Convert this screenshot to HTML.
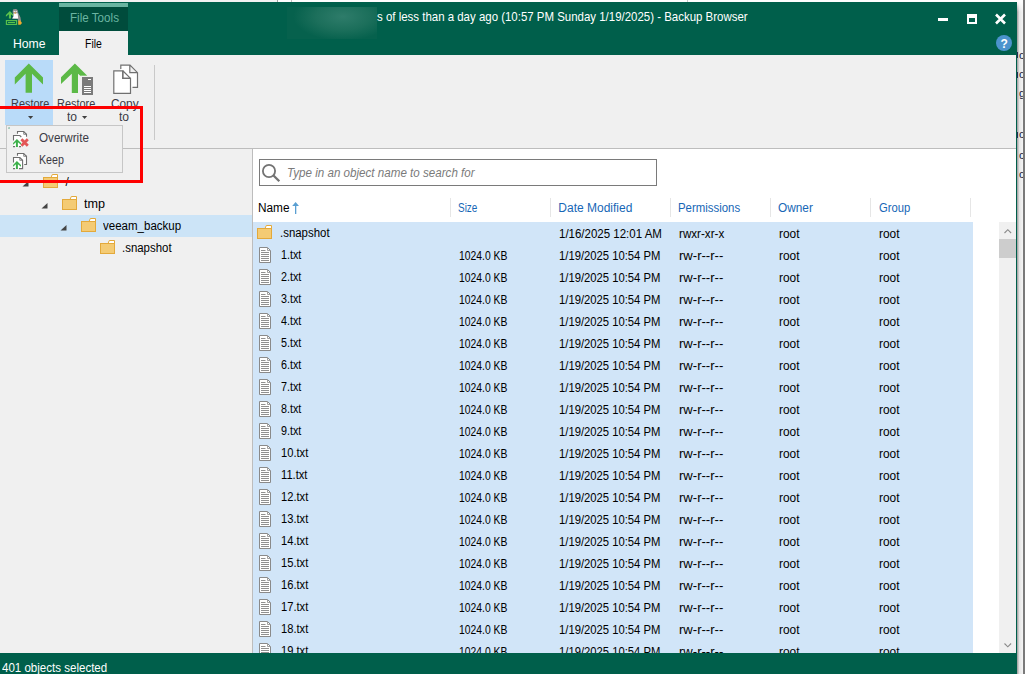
<!DOCTYPE html>
<html><head><meta charset="utf-8"><title>Backup Browser</title>
<style>
*{margin:0;padding:0;box-sizing:border-box}
html,body{width:1025px;height:674px;overflow:hidden;background:#fdfdfd;position:relative;font-family:"Liberation Sans",sans-serif}
.a{position:absolute}
.t{white-space:nowrap}
</style></head><body>
<div class="a" style="left:0px;top:0px;width:277px;height:2px;background:#f2f2f2"></div>
<div class="a" style="left:277px;top:0px;width:1px;height:2px;background:#a0a0a0"></div>
<div class="a" style="left:687px;top:0px;width:1px;height:2px;background:#c8c8c8"></div>
<div class="a" style="left:291px;top:0px;width:1px;height:2px;background:#c0c0c0"></div>
<div class="a" style="left:0px;top:2px;width:1016px;height:53px;background:#005f4b"></div>
<div class="a" style="left:1016px;top:2px;width:1px;height:672px;background:#005f4b"></div>
<div class="a" style="left:1017px;top:2px;width:6px;height:672px;background:linear-gradient(to right,#9a9a9a,#e6e6e6 40%,#f4f4f4)"></div>
<div class="a" style="left:1017px;top:2px;width:6px;height:10px;background:linear-gradient(to bottom,#fdfdfd,rgba(253,253,253,0))"></div>
<div class="a" style="left:1023px;top:0px;width:2px;height:674px;background:#7a7a7a"></div>
<svg class="a" style="left:0;top:0" width="26" height="30" viewBox="0 0 26 30">
<rect x="6.4" y="20.6" width="10.2" height="3.8" fill="none" stroke="#5bc44c" stroke-width="1.1"/>
<rect x="8" y="22" width="7" height="1" fill="#5bc44c"/>
<path d="M9.9 11 L13.8 14.9 L13.8 16.8 L11 14.3 L11 18.6 L8.9 18.6 L8.9 14.3 L5.9 16.8 L5.9 14.9 Z" fill="#5bc44c"/>
<path d="M13 9.5 C14.5 8.6 17 8.8 17.8 10.5 L18.3 13 L20.5 17.5 L21 21 L18 21.5 L17.8 19 L12.2 18.6 L13.5 15.5 L12.6 12 Z" fill="#8f8f8f"/>
<path d="M13.6 13.6 L17.6 13.2 L18.2 18.6 L12.2 18.6 L13.6 16.5 Z" fill="#fff"/>
<circle cx="14.3" cy="11.6" r="0.8" fill="#e8e8e8"/><circle cx="16.2" cy="11.6" r="0.8" fill="#e8e8e8"/>
<path d="M14 12.6 L16.3 12.4 L15.3 13.9 Z" fill="#f0a22a"/>
<path d="M18.2 20.8 L20.3 20.4 L22 23 L20.5 24.7 L18.2 24.7 Z" fill="#eeab2e"/>
</svg>
<div class="a" style="left:59px;top:3px;width:69px;height:28px;background:#004c3c"></div>
<div class="a" style="left:59px;top:3px;width:69px;height:4px;background:#69b4a1"></div>
<div class="a t" style="left:69.50px;top:11.84px;font-size:12px;line-height:12px;color:#6bb5a2;transform:scaleX(0.9700);transform-origin:0 0;">File Tools</div>
<div class="a" style="left:59px;top:31px;width:69px;height:24px;background:#f0f0f0"></div>
<div class="a t" style="left:84.60px;top:37.84px;font-size:12px;line-height:12px;color:#000;transform:scaleX(0.8700);transform-origin:0 0;">File</div>
<div class="a t" style="left:12.50px;top:37.84px;font-size:12px;line-height:12px;color:#fff;transform:scaleX(1.0156);transform-origin:0 0;">Home</div>
<div class="a" style="left:287px;top:7px;width:90px;height:32px;background:radial-gradient(ellipse 55% 75% at 62% 30%,#2e7c6a,#1c6f5b 55%,#06614d 100%)"></div>
<div class="a t" style="left:377.00px;top:10.00px;font-size:13px;line-height:13px;color:#fff;transform:scaleX(0.8812);transform-origin:0 0;">s of less than a day ago (10:57 PM Sunday 1/19/2025) - Backup Browser</div>
<div class="a" style="left:938px;top:18px;width:10px;height:3px;background:#fff"></div>
<div class="a" style="left:967px;top:14px;width:10px;height:10px;border:2px solid #fff;border-top-width:4px"></div>
<svg class="a" style="left:994px;top:13px" width="13" height="12" viewBox="0 0 13 12">
<path d="M2 1.5 L11 10.5 M11 1.5 L2 10.5" stroke="#fff" stroke-width="2.6"/></svg>
<div class="a" style="left:996px;top:35px;width:16px;height:16px;border-radius:50%;background:#4b93cd"></div>
<div class="a t" style="left:1000.50px;top:37.84px;font-size:12px;line-height:12px;color:#fff;font-weight:bold;">?</div>
<div class="a" style="left:0px;top:55px;width:1016px;height:93px;background:#f0f0f0"></div>
<div class="a" style="left:0px;top:148px;width:1016px;height:1px;background:#bdbdbd"></div>
<div class="a" style="left:5px;top:60px;width:48px;height:65px;background:#b9dbf9"></div>
<svg class="a" style="left:0;top:55px" width="160" height="45" viewBox="0 55 160 45">
<path d="M28.8 63.6 L43 77.6 L43 84.4 L32 73.7 L32 92.8 L25.6 92.8 L25.6 73.7 L14.8 84.4 L14.8 77.6 Z" fill="#5cb947"/>
<path d="M74.9 63.5 L87.3 75.7 L80.3 75.7 L78 73.8 L78 93 L71.8 93 L71.8 73.8 L61 84 L61 77.2 Z" fill="#5cb947"/>
<rect x="81" y="75.9" width="13" height="20" fill="#f0f0f0"/>
<rect x="82" y="77" width="11" height="18" fill="#7b7b7b"/>
<rect x="88" y="79" width="3" height="1" fill="#fff"/>
<rect x="84" y="86" width="7" height="1" fill="#fff"/>
<rect x="84" y="88" width="7" height="1" fill="#fff"/>
<rect x="84" y="90" width="7" height="1" fill="#fff"/>
<rect x="84" y="92" width="7" height="1" fill="#fff"/>
<path d="M120.8 65.2 H129.8 V72.7 H137.5 V87.3 H120.8 Z" fill="#fff"/>
<path d="M120.8 69 V65.2 H130 L137.5 72.7 V87.3 H132.5 M129.8 65.2 V72.7 H137.5" fill="none" stroke="#707070" stroke-width="1.2"/>
<path d="M113.8 70.8 H122.8 V78.4 H130.5 V93.3 H113.8 Z" fill="#fff" stroke="#707070" stroke-width="1.2"/>
<path d="M122.8 70.8 L130.5 78.4 M122.8 70.8 V78.4 H130.5" fill="none" stroke="#707070" stroke-width="1.2"/>
</svg>
<div class="a t" style="left:10.60px;top:97.84px;font-size:12px;line-height:12px;color:#3b3b45;transform:scaleX(0.9119);transform-origin:0 0;">Restore</div>
<div class="a t" style="left:56.50px;top:97.84px;font-size:12px;line-height:12px;color:#3b3b45;transform:scaleX(0.9119);transform-origin:0 0;">Restore</div>
<div class="a t" style="left:110.60px;top:97.84px;font-size:12px;line-height:12px;color:#3b3b45;transform:scaleX(0.9857);transform-origin:0 0;">Copy</div>
<div class="a t" style="left:67.20px;top:110.84px;font-size:12px;line-height:12px;color:#3b3b45;transform:scaleX(1.0100);transform-origin:0 0;">to</div>
<div class="a t" style="left:119.00px;top:110.84px;font-size:12px;line-height:12px;color:#3b3b45;transform:scaleX(1.0100);transform-origin:0 0;">to</div>
<svg class="a" style="left:0;top:110px" width="100" height="12" viewBox="0 110 100 12">
<path d="M28 116 L33.2 116 L30.6 119 Z" fill="#404040"/>
<path d="M82 116 L87.2 116 L84.6 119 Z" fill="#404040"/>
</svg>
<div class="a" style="left:154px;top:65px;width:1px;height:75px;background:#c9c9c9"></div>
<div class="a" style="left:0px;top:149px;width:252px;height:504px;background:#f0f0f0"></div>
<div class="a" style="left:252px;top:149px;width:1px;height:504px;background:#bdbdbd"></div>
<div class="a" style="left:253px;top:149px;width:763px;height:504px;background:#fff"></div>
<div class="a" style="left:0px;top:215px;width:252px;height:22px;background:#cce4f7"></div>
<svg class="a" style="left:22px;top:180.5px" width="7" height="6" viewBox="0 0 7 6"><path d="M6.5 0 L6.5 5.5 L0.5 5.5 Z" fill="#444"/></svg>
<svg class="a" style="left:43px;top:174px" width="15" height="14" viewBox="0 0 15 14">
<path d="M8 3.5 L9.3 0.5 L14.5 0.5 L14.5 3.5 Z" fill="#fff" stroke="#e3a93b" stroke-width="1"/>
<rect x="0.5" y="3.5" width="14" height="10" fill="#f4cb74" stroke="#e3a93b" stroke-width="1"/>
</svg>
<div class="a t" style="left:65.50px;top:175.84px;font-size:12px;line-height:12px;color:#000;">/</div>
<svg class="a" style="left:41px;top:202.5px" width="7" height="6" viewBox="0 0 7 6"><path d="M6.5 0 L6.5 5.5 L0.5 5.5 Z" fill="#444"/></svg>
<svg class="a" style="left:62px;top:196px" width="15" height="14" viewBox="0 0 15 14">
<path d="M8 3.5 L9.3 0.5 L14.5 0.5 L14.5 3.5 Z" fill="#fff" stroke="#e3a93b" stroke-width="1"/>
<rect x="0.5" y="3.5" width="14" height="10" fill="#f4cb74" stroke="#e3a93b" stroke-width="1"/>
</svg>
<div class="a t" style="left:83.80px;top:197.84px;font-size:12px;line-height:12px;color:#000;transform:scaleX(1.0500);transform-origin:0 0;">tmp</div>
<svg class="a" style="left:60px;top:224.5px" width="7" height="6" viewBox="0 0 7 6"><path d="M6.5 0 L6.5 5.5 L0.5 5.5 Z" fill="#444"/></svg>
<svg class="a" style="left:81px;top:218px" width="15" height="14" viewBox="0 0 15 14">
<path d="M8 3.5 L9.3 0.5 L14.5 0.5 L14.5 3.5 Z" fill="#fff" stroke="#e3a93b" stroke-width="1"/>
<rect x="0.5" y="3.5" width="14" height="10" fill="#f4cb74" stroke="#e3a93b" stroke-width="1"/>
</svg>
<div class="a t" style="left:102.70px;top:219.84px;font-size:12px;line-height:12px;color:#000;transform:scaleX(0.9598);transform-origin:0 0;">veeam_backup</div>
<svg class="a" style="left:100px;top:240px" width="15" height="14" viewBox="0 0 15 14">
<path d="M8 3.5 L9.3 0.5 L14.5 0.5 L14.5 3.5 Z" fill="#fff" stroke="#e3a93b" stroke-width="1"/>
<rect x="0.5" y="3.5" width="14" height="10" fill="#f4cb74" stroke="#e3a93b" stroke-width="1"/>
</svg>
<div class="a t" style="left:121.60px;top:241.84px;font-size:12px;line-height:12px;color:#000;transform:scaleX(0.9528);transform-origin:0 0;">.snapshot</div>
<div class="a" style="left:259px;top:159px;width:398px;height:27px;border:1px solid #7a7a7a;background:#fff"></div>
<svg class="a" style="left:260px;top:162px" width="22" height="22" viewBox="260 162 22 22">
<circle cx="269" cy="171" r="6.1" fill="none" stroke="#737373" stroke-width="1.8"/>
<path d="M273.5 175.5 L279.3 181.3" stroke="#737373" stroke-width="2.3"/>
</svg>
<div class="a t" style="left:287.30px;top:166.84px;font-size:12px;line-height:12px;color:#7a7a7a;font-style:italic;transform:scaleX(0.9677);transform-origin:0 0;">Type in an object name to search for</div>
<div class="a t" style="left:258.40px;top:201.84px;font-size:12px;line-height:12px;color:#000;transform:scaleX(0.9844);transform-origin:0 0;">Name</div>
<svg class="a" style="left:290px;top:200px" width="12" height="16" viewBox="290 200 12 16">
<path d="M292.2 206 L295.6 202 L299 206 Z" fill="#5a9fd2"/><rect x="295" y="205" width="1.3" height="9" fill="#5a9fd2"/>
</svg>
<div class="a t" style="left:458.10px;top:201.84px;font-size:12px;line-height:12px;color:#1767b6;transform:scaleX(0.8292);transform-origin:0 0;">Size</div>
<div class="a t" style="left:558.30px;top:201.84px;font-size:12px;line-height:12px;color:#1767b6;">Date Modified</div>
<div class="a t" style="left:678.40px;top:201.84px;font-size:12px;line-height:12px;color:#1767b6;transform:scaleX(0.9508);transform-origin:0 0;">Permissions</div>
<div class="a t" style="left:778.30px;top:201.84px;font-size:12px;line-height:12px;color:#1767b6;transform:scaleX(0.9857);transform-origin:0 0;">Owner</div>
<div class="a t" style="left:878.60px;top:201.84px;font-size:12px;line-height:12px;color:#1767b6;transform:scaleX(0.9353);transform-origin:0 0;">Group</div>
<div class="a" style="left:450px;top:198px;width:1px;height:19px;background:#e6e6e6"></div>
<div class="a" style="left:550px;top:198px;width:1px;height:19px;background:#e6e6e6"></div>
<div class="a" style="left:670px;top:198px;width:1px;height:19px;background:#e6e6e6"></div>
<div class="a" style="left:770px;top:198px;width:1px;height:19px;background:#e6e6e6"></div>
<div class="a" style="left:870px;top:198px;width:1px;height:19px;background:#e6e6e6"></div>
<div class="a" style="left:970px;top:198px;width:1px;height:19px;background:#e6e6e6"></div>
<div class="a" style="left:253px;top:222px;width:720px;height:22px;background:#d1e5f8"></div>
<div class="a" style="left:253px;top:244px;width:720px;height:22px;background:#d1e5f8"></div>
<div class="a" style="left:253px;top:266px;width:720px;height:22px;background:#d1e5f8"></div>
<div class="a" style="left:253px;top:288px;width:720px;height:22px;background:#d1e5f8"></div>
<div class="a" style="left:253px;top:310px;width:720px;height:22px;background:#d1e5f8"></div>
<div class="a" style="left:253px;top:332px;width:720px;height:22px;background:#d1e5f8"></div>
<div class="a" style="left:253px;top:354px;width:720px;height:22px;background:#d1e5f8"></div>
<div class="a" style="left:253px;top:376px;width:720px;height:22px;background:#d1e5f8"></div>
<div class="a" style="left:253px;top:398px;width:720px;height:22px;background:#d1e5f8"></div>
<div class="a" style="left:253px;top:420px;width:720px;height:22px;background:#d1e5f8"></div>
<div class="a" style="left:253px;top:442px;width:720px;height:22px;background:#d1e5f8"></div>
<div class="a" style="left:253px;top:464px;width:720px;height:22px;background:#d1e5f8"></div>
<div class="a" style="left:253px;top:486px;width:720px;height:22px;background:#d1e5f8"></div>
<div class="a" style="left:253px;top:508px;width:720px;height:22px;background:#d1e5f8"></div>
<div class="a" style="left:253px;top:530px;width:720px;height:22px;background:#d1e5f8"></div>
<div class="a" style="left:253px;top:552px;width:720px;height:22px;background:#d1e5f8"></div>
<div class="a" style="left:253px;top:574px;width:720px;height:22px;background:#d1e5f8"></div>
<div class="a" style="left:253px;top:596px;width:720px;height:22px;background:#d1e5f8"></div>
<div class="a" style="left:253px;top:618px;width:720px;height:22px;background:#d1e5f8"></div>
<div class="a" style="left:253px;top:640px;width:720px;height:13px;background:#d1e5f8"></div>
<div class="a" style="left:253px;top:222px;width:746px;height:431px;overflow:hidden">
<svg class="a" style="left:4px;top:3px" width="15" height="14" viewBox="0 0 15 14">
<path d="M8 3.5 L9.3 0.5 L14.5 0.5 L14.5 3.5 Z" fill="#fff" stroke="#e3a93b" stroke-width="1"/>
<rect x="0.5" y="3.5" width="14" height="10" fill="#f4cb74" stroke="#e3a93b" stroke-width="1"/>
</svg>
<div class="a t" style="left:27.30px;top:4.84px;font-size:12px;line-height:12px;color:#000;transform:scaleX(0.9530);transform-origin:0 0;">.snapshot</div>
<div class="a t" style="left:305.50px;top:5.84px;font-size:12px;line-height:12px;color:#000;transform:scaleX(0.9579);transform-origin:0 0;">1/16/2025 12:01 AM</div>
<div class="a t" style="left:425.50px;top:5.84px;font-size:12px;line-height:12px;color:#000;transform:scaleX(0.9702);transform-origin:0 0;">rwxr-xr-x</div>
<div class="a t" style="left:525.50px;top:5.84px;font-size:12px;line-height:12px;color:#000;transform:scaleX(0.9905);transform-origin:0 0;">root</div>
<div class="a t" style="left:625.50px;top:5.84px;font-size:12px;line-height:12px;color:#000;transform:scaleX(0.9905);transform-origin:0 0;">root</div>
<svg class="a" style="left:6px;top:25px" width="12" height="16" viewBox="0 0 12 16">
<path d="M0.5 0.5 L8.5 0.5 L11.5 3.5 L11.5 15.5 L0.5 15.5 Z" fill="#fff" stroke="#8a8a8a" stroke-width="1"/>
<path d="M8.5 0.5 L8.5 3.5 L11.5 3.5" fill="none" stroke="#a0a0a0" stroke-width="1"/>
<path d="M2 3.5 H6.5 M2 5.5 H10 M2 7.5 H10 M2 9.5 H10 M2 11.5 H10 M2 13.5 H10" stroke="#909090" stroke-width="1"/>
</svg>
<div class="a t" style="left:28.00px;top:26.84px;font-size:12px;line-height:12px;color:#000;transform:scaleX(0.8960);transform-origin:0 0;">1.txt</div>
<div class="a t" style="left:206.00px;top:27.84px;font-size:12px;line-height:12px;color:#000;transform:scaleX(0.8643);transform-origin:0 0;">1024.0 KB</div>
<div class="a t" style="left:305.50px;top:27.84px;font-size:12px;line-height:12px;color:#000;transform:scaleX(0.9380);transform-origin:0 0;">1/19/2025 10:54 PM</div>
<div class="a t" style="left:425.50px;top:27.84px;font-size:12px;line-height:12px;color:#000;transform:scaleX(1.0902);transform-origin:0 0;">rw-r--r--</div>
<div class="a t" style="left:525.50px;top:27.84px;font-size:12px;line-height:12px;color:#000;transform:scaleX(0.9905);transform-origin:0 0;">root</div>
<div class="a t" style="left:625.50px;top:27.84px;font-size:12px;line-height:12px;color:#000;transform:scaleX(0.9905);transform-origin:0 0;">root</div>
<svg class="a" style="left:6px;top:47px" width="12" height="16" viewBox="0 0 12 16">
<path d="M0.5 0.5 L8.5 0.5 L11.5 3.5 L11.5 15.5 L0.5 15.5 Z" fill="#fff" stroke="#8a8a8a" stroke-width="1"/>
<path d="M8.5 0.5 L8.5 3.5 L11.5 3.5" fill="none" stroke="#a0a0a0" stroke-width="1"/>
<path d="M2 3.5 H6.5 M2 5.5 H10 M2 7.5 H10 M2 9.5 H10 M2 11.5 H10 M2 13.5 H10" stroke="#909090" stroke-width="1"/>
</svg>
<div class="a t" style="left:28.00px;top:48.84px;font-size:12px;line-height:12px;color:#000;transform:scaleX(0.8960);transform-origin:0 0;">2.txt</div>
<div class="a t" style="left:206.00px;top:49.84px;font-size:12px;line-height:12px;color:#000;transform:scaleX(0.8643);transform-origin:0 0;">1024.0 KB</div>
<div class="a t" style="left:305.50px;top:49.84px;font-size:12px;line-height:12px;color:#000;transform:scaleX(0.9380);transform-origin:0 0;">1/19/2025 10:54 PM</div>
<div class="a t" style="left:425.50px;top:49.84px;font-size:12px;line-height:12px;color:#000;transform:scaleX(1.0902);transform-origin:0 0;">rw-r--r--</div>
<div class="a t" style="left:525.50px;top:49.84px;font-size:12px;line-height:12px;color:#000;transform:scaleX(0.9905);transform-origin:0 0;">root</div>
<div class="a t" style="left:625.50px;top:49.84px;font-size:12px;line-height:12px;color:#000;transform:scaleX(0.9905);transform-origin:0 0;">root</div>
<svg class="a" style="left:6px;top:69px" width="12" height="16" viewBox="0 0 12 16">
<path d="M0.5 0.5 L8.5 0.5 L11.5 3.5 L11.5 15.5 L0.5 15.5 Z" fill="#fff" stroke="#8a8a8a" stroke-width="1"/>
<path d="M8.5 0.5 L8.5 3.5 L11.5 3.5" fill="none" stroke="#a0a0a0" stroke-width="1"/>
<path d="M2 3.5 H6.5 M2 5.5 H10 M2 7.5 H10 M2 9.5 H10 M2 11.5 H10 M2 13.5 H10" stroke="#909090" stroke-width="1"/>
</svg>
<div class="a t" style="left:28.00px;top:70.84px;font-size:12px;line-height:12px;color:#000;transform:scaleX(0.8960);transform-origin:0 0;">3.txt</div>
<div class="a t" style="left:206.00px;top:71.84px;font-size:12px;line-height:12px;color:#000;transform:scaleX(0.8643);transform-origin:0 0;">1024.0 KB</div>
<div class="a t" style="left:305.50px;top:71.84px;font-size:12px;line-height:12px;color:#000;transform:scaleX(0.9380);transform-origin:0 0;">1/19/2025 10:54 PM</div>
<div class="a t" style="left:425.50px;top:71.84px;font-size:12px;line-height:12px;color:#000;transform:scaleX(1.0902);transform-origin:0 0;">rw-r--r--</div>
<div class="a t" style="left:525.50px;top:71.84px;font-size:12px;line-height:12px;color:#000;transform:scaleX(0.9905);transform-origin:0 0;">root</div>
<div class="a t" style="left:625.50px;top:71.84px;font-size:12px;line-height:12px;color:#000;transform:scaleX(0.9905);transform-origin:0 0;">root</div>
<svg class="a" style="left:6px;top:91px" width="12" height="16" viewBox="0 0 12 16">
<path d="M0.5 0.5 L8.5 0.5 L11.5 3.5 L11.5 15.5 L0.5 15.5 Z" fill="#fff" stroke="#8a8a8a" stroke-width="1"/>
<path d="M8.5 0.5 L8.5 3.5 L11.5 3.5" fill="none" stroke="#a0a0a0" stroke-width="1"/>
<path d="M2 3.5 H6.5 M2 5.5 H10 M2 7.5 H10 M2 9.5 H10 M2 11.5 H10 M2 13.5 H10" stroke="#909090" stroke-width="1"/>
</svg>
<div class="a t" style="left:28.00px;top:92.84px;font-size:12px;line-height:12px;color:#000;transform:scaleX(0.8960);transform-origin:0 0;">4.txt</div>
<div class="a t" style="left:206.00px;top:93.84px;font-size:12px;line-height:12px;color:#000;transform:scaleX(0.8643);transform-origin:0 0;">1024.0 KB</div>
<div class="a t" style="left:305.50px;top:93.84px;font-size:12px;line-height:12px;color:#000;transform:scaleX(0.9380);transform-origin:0 0;">1/19/2025 10:54 PM</div>
<div class="a t" style="left:425.50px;top:93.84px;font-size:12px;line-height:12px;color:#000;transform:scaleX(1.0902);transform-origin:0 0;">rw-r--r--</div>
<div class="a t" style="left:525.50px;top:93.84px;font-size:12px;line-height:12px;color:#000;transform:scaleX(0.9905);transform-origin:0 0;">root</div>
<div class="a t" style="left:625.50px;top:93.84px;font-size:12px;line-height:12px;color:#000;transform:scaleX(0.9905);transform-origin:0 0;">root</div>
<svg class="a" style="left:6px;top:113px" width="12" height="16" viewBox="0 0 12 16">
<path d="M0.5 0.5 L8.5 0.5 L11.5 3.5 L11.5 15.5 L0.5 15.5 Z" fill="#fff" stroke="#8a8a8a" stroke-width="1"/>
<path d="M8.5 0.5 L8.5 3.5 L11.5 3.5" fill="none" stroke="#a0a0a0" stroke-width="1"/>
<path d="M2 3.5 H6.5 M2 5.5 H10 M2 7.5 H10 M2 9.5 H10 M2 11.5 H10 M2 13.5 H10" stroke="#909090" stroke-width="1"/>
</svg>
<div class="a t" style="left:28.00px;top:114.84px;font-size:12px;line-height:12px;color:#000;transform:scaleX(0.8960);transform-origin:0 0;">5.txt</div>
<div class="a t" style="left:206.00px;top:115.84px;font-size:12px;line-height:12px;color:#000;transform:scaleX(0.8643);transform-origin:0 0;">1024.0 KB</div>
<div class="a t" style="left:305.50px;top:115.84px;font-size:12px;line-height:12px;color:#000;transform:scaleX(0.9380);transform-origin:0 0;">1/19/2025 10:54 PM</div>
<div class="a t" style="left:425.50px;top:115.84px;font-size:12px;line-height:12px;color:#000;transform:scaleX(1.0902);transform-origin:0 0;">rw-r--r--</div>
<div class="a t" style="left:525.50px;top:115.84px;font-size:12px;line-height:12px;color:#000;transform:scaleX(0.9905);transform-origin:0 0;">root</div>
<div class="a t" style="left:625.50px;top:115.84px;font-size:12px;line-height:12px;color:#000;transform:scaleX(0.9905);transform-origin:0 0;">root</div>
<svg class="a" style="left:6px;top:135px" width="12" height="16" viewBox="0 0 12 16">
<path d="M0.5 0.5 L8.5 0.5 L11.5 3.5 L11.5 15.5 L0.5 15.5 Z" fill="#fff" stroke="#8a8a8a" stroke-width="1"/>
<path d="M8.5 0.5 L8.5 3.5 L11.5 3.5" fill="none" stroke="#a0a0a0" stroke-width="1"/>
<path d="M2 3.5 H6.5 M2 5.5 H10 M2 7.5 H10 M2 9.5 H10 M2 11.5 H10 M2 13.5 H10" stroke="#909090" stroke-width="1"/>
</svg>
<div class="a t" style="left:28.00px;top:136.84px;font-size:12px;line-height:12px;color:#000;transform:scaleX(0.8960);transform-origin:0 0;">6.txt</div>
<div class="a t" style="left:206.00px;top:137.84px;font-size:12px;line-height:12px;color:#000;transform:scaleX(0.8643);transform-origin:0 0;">1024.0 KB</div>
<div class="a t" style="left:305.50px;top:137.84px;font-size:12px;line-height:12px;color:#000;transform:scaleX(0.9380);transform-origin:0 0;">1/19/2025 10:54 PM</div>
<div class="a t" style="left:425.50px;top:137.84px;font-size:12px;line-height:12px;color:#000;transform:scaleX(1.0902);transform-origin:0 0;">rw-r--r--</div>
<div class="a t" style="left:525.50px;top:137.84px;font-size:12px;line-height:12px;color:#000;transform:scaleX(0.9905);transform-origin:0 0;">root</div>
<div class="a t" style="left:625.50px;top:137.84px;font-size:12px;line-height:12px;color:#000;transform:scaleX(0.9905);transform-origin:0 0;">root</div>
<svg class="a" style="left:6px;top:157px" width="12" height="16" viewBox="0 0 12 16">
<path d="M0.5 0.5 L8.5 0.5 L11.5 3.5 L11.5 15.5 L0.5 15.5 Z" fill="#fff" stroke="#8a8a8a" stroke-width="1"/>
<path d="M8.5 0.5 L8.5 3.5 L11.5 3.5" fill="none" stroke="#a0a0a0" stroke-width="1"/>
<path d="M2 3.5 H6.5 M2 5.5 H10 M2 7.5 H10 M2 9.5 H10 M2 11.5 H10 M2 13.5 H10" stroke="#909090" stroke-width="1"/>
</svg>
<div class="a t" style="left:28.00px;top:158.84px;font-size:12px;line-height:12px;color:#000;transform:scaleX(0.8960);transform-origin:0 0;">7.txt</div>
<div class="a t" style="left:206.00px;top:159.84px;font-size:12px;line-height:12px;color:#000;transform:scaleX(0.8643);transform-origin:0 0;">1024.0 KB</div>
<div class="a t" style="left:305.50px;top:159.84px;font-size:12px;line-height:12px;color:#000;transform:scaleX(0.9380);transform-origin:0 0;">1/19/2025 10:54 PM</div>
<div class="a t" style="left:425.50px;top:159.84px;font-size:12px;line-height:12px;color:#000;transform:scaleX(1.0902);transform-origin:0 0;">rw-r--r--</div>
<div class="a t" style="left:525.50px;top:159.84px;font-size:12px;line-height:12px;color:#000;transform:scaleX(0.9905);transform-origin:0 0;">root</div>
<div class="a t" style="left:625.50px;top:159.84px;font-size:12px;line-height:12px;color:#000;transform:scaleX(0.9905);transform-origin:0 0;">root</div>
<svg class="a" style="left:6px;top:179px" width="12" height="16" viewBox="0 0 12 16">
<path d="M0.5 0.5 L8.5 0.5 L11.5 3.5 L11.5 15.5 L0.5 15.5 Z" fill="#fff" stroke="#8a8a8a" stroke-width="1"/>
<path d="M8.5 0.5 L8.5 3.5 L11.5 3.5" fill="none" stroke="#a0a0a0" stroke-width="1"/>
<path d="M2 3.5 H6.5 M2 5.5 H10 M2 7.5 H10 M2 9.5 H10 M2 11.5 H10 M2 13.5 H10" stroke="#909090" stroke-width="1"/>
</svg>
<div class="a t" style="left:28.00px;top:180.84px;font-size:12px;line-height:12px;color:#000;transform:scaleX(0.8960);transform-origin:0 0;">8.txt</div>
<div class="a t" style="left:206.00px;top:181.84px;font-size:12px;line-height:12px;color:#000;transform:scaleX(0.8643);transform-origin:0 0;">1024.0 KB</div>
<div class="a t" style="left:305.50px;top:181.84px;font-size:12px;line-height:12px;color:#000;transform:scaleX(0.9380);transform-origin:0 0;">1/19/2025 10:54 PM</div>
<div class="a t" style="left:425.50px;top:181.84px;font-size:12px;line-height:12px;color:#000;transform:scaleX(1.0902);transform-origin:0 0;">rw-r--r--</div>
<div class="a t" style="left:525.50px;top:181.84px;font-size:12px;line-height:12px;color:#000;transform:scaleX(0.9905);transform-origin:0 0;">root</div>
<div class="a t" style="left:625.50px;top:181.84px;font-size:12px;line-height:12px;color:#000;transform:scaleX(0.9905);transform-origin:0 0;">root</div>
<svg class="a" style="left:6px;top:201px" width="12" height="16" viewBox="0 0 12 16">
<path d="M0.5 0.5 L8.5 0.5 L11.5 3.5 L11.5 15.5 L0.5 15.5 Z" fill="#fff" stroke="#8a8a8a" stroke-width="1"/>
<path d="M8.5 0.5 L8.5 3.5 L11.5 3.5" fill="none" stroke="#a0a0a0" stroke-width="1"/>
<path d="M2 3.5 H6.5 M2 5.5 H10 M2 7.5 H10 M2 9.5 H10 M2 11.5 H10 M2 13.5 H10" stroke="#909090" stroke-width="1"/>
</svg>
<div class="a t" style="left:28.00px;top:202.84px;font-size:12px;line-height:12px;color:#000;transform:scaleX(0.8960);transform-origin:0 0;">9.txt</div>
<div class="a t" style="left:206.00px;top:203.84px;font-size:12px;line-height:12px;color:#000;transform:scaleX(0.8643);transform-origin:0 0;">1024.0 KB</div>
<div class="a t" style="left:305.50px;top:203.84px;font-size:12px;line-height:12px;color:#000;transform:scaleX(0.9380);transform-origin:0 0;">1/19/2025 10:54 PM</div>
<div class="a t" style="left:425.50px;top:203.84px;font-size:12px;line-height:12px;color:#000;transform:scaleX(1.0902);transform-origin:0 0;">rw-r--r--</div>
<div class="a t" style="left:525.50px;top:203.84px;font-size:12px;line-height:12px;color:#000;transform:scaleX(0.9905);transform-origin:0 0;">root</div>
<div class="a t" style="left:625.50px;top:203.84px;font-size:12px;line-height:12px;color:#000;transform:scaleX(0.9905);transform-origin:0 0;">root</div>
<svg class="a" style="left:6px;top:223px" width="12" height="16" viewBox="0 0 12 16">
<path d="M0.5 0.5 L8.5 0.5 L11.5 3.5 L11.5 15.5 L0.5 15.5 Z" fill="#fff" stroke="#8a8a8a" stroke-width="1"/>
<path d="M8.5 0.5 L8.5 3.5 L11.5 3.5" fill="none" stroke="#a0a0a0" stroke-width="1"/>
<path d="M2 3.5 H6.5 M2 5.5 H10 M2 7.5 H10 M2 9.5 H10 M2 11.5 H10 M2 13.5 H10" stroke="#909090" stroke-width="1"/>
</svg>
<div class="a t" style="left:28.00px;top:224.84px;font-size:12px;line-height:12px;color:#000;transform:scaleX(0.9300);transform-origin:0 0;">10.txt</div>
<div class="a t" style="left:206.00px;top:225.84px;font-size:12px;line-height:12px;color:#000;transform:scaleX(0.8643);transform-origin:0 0;">1024.0 KB</div>
<div class="a t" style="left:305.50px;top:225.84px;font-size:12px;line-height:12px;color:#000;transform:scaleX(0.9380);transform-origin:0 0;">1/19/2025 10:54 PM</div>
<div class="a t" style="left:425.50px;top:225.84px;font-size:12px;line-height:12px;color:#000;transform:scaleX(1.0902);transform-origin:0 0;">rw-r--r--</div>
<div class="a t" style="left:525.50px;top:225.84px;font-size:12px;line-height:12px;color:#000;transform:scaleX(0.9905);transform-origin:0 0;">root</div>
<div class="a t" style="left:625.50px;top:225.84px;font-size:12px;line-height:12px;color:#000;transform:scaleX(0.9905);transform-origin:0 0;">root</div>
<svg class="a" style="left:6px;top:245px" width="12" height="16" viewBox="0 0 12 16">
<path d="M0.5 0.5 L8.5 0.5 L11.5 3.5 L11.5 15.5 L0.5 15.5 Z" fill="#fff" stroke="#8a8a8a" stroke-width="1"/>
<path d="M8.5 0.5 L8.5 3.5 L11.5 3.5" fill="none" stroke="#a0a0a0" stroke-width="1"/>
<path d="M2 3.5 H6.5 M2 5.5 H10 M2 7.5 H10 M2 9.5 H10 M2 11.5 H10 M2 13.5 H10" stroke="#909090" stroke-width="1"/>
</svg>
<div class="a t" style="left:28.00px;top:246.84px;font-size:12px;line-height:12px;color:#000;transform:scaleX(0.9300);transform-origin:0 0;">11.txt</div>
<div class="a t" style="left:206.00px;top:247.84px;font-size:12px;line-height:12px;color:#000;transform:scaleX(0.8643);transform-origin:0 0;">1024.0 KB</div>
<div class="a t" style="left:305.50px;top:247.84px;font-size:12px;line-height:12px;color:#000;transform:scaleX(0.9380);transform-origin:0 0;">1/19/2025 10:54 PM</div>
<div class="a t" style="left:425.50px;top:247.84px;font-size:12px;line-height:12px;color:#000;transform:scaleX(1.0902);transform-origin:0 0;">rw-r--r--</div>
<div class="a t" style="left:525.50px;top:247.84px;font-size:12px;line-height:12px;color:#000;transform:scaleX(0.9905);transform-origin:0 0;">root</div>
<div class="a t" style="left:625.50px;top:247.84px;font-size:12px;line-height:12px;color:#000;transform:scaleX(0.9905);transform-origin:0 0;">root</div>
<svg class="a" style="left:6px;top:267px" width="12" height="16" viewBox="0 0 12 16">
<path d="M0.5 0.5 L8.5 0.5 L11.5 3.5 L11.5 15.5 L0.5 15.5 Z" fill="#fff" stroke="#8a8a8a" stroke-width="1"/>
<path d="M8.5 0.5 L8.5 3.5 L11.5 3.5" fill="none" stroke="#a0a0a0" stroke-width="1"/>
<path d="M2 3.5 H6.5 M2 5.5 H10 M2 7.5 H10 M2 9.5 H10 M2 11.5 H10 M2 13.5 H10" stroke="#909090" stroke-width="1"/>
</svg>
<div class="a t" style="left:28.00px;top:268.84px;font-size:12px;line-height:12px;color:#000;transform:scaleX(0.9300);transform-origin:0 0;">12.txt</div>
<div class="a t" style="left:206.00px;top:269.84px;font-size:12px;line-height:12px;color:#000;transform:scaleX(0.8643);transform-origin:0 0;">1024.0 KB</div>
<div class="a t" style="left:305.50px;top:269.84px;font-size:12px;line-height:12px;color:#000;transform:scaleX(0.9380);transform-origin:0 0;">1/19/2025 10:54 PM</div>
<div class="a t" style="left:425.50px;top:269.84px;font-size:12px;line-height:12px;color:#000;transform:scaleX(1.0902);transform-origin:0 0;">rw-r--r--</div>
<div class="a t" style="left:525.50px;top:269.84px;font-size:12px;line-height:12px;color:#000;transform:scaleX(0.9905);transform-origin:0 0;">root</div>
<div class="a t" style="left:625.50px;top:269.84px;font-size:12px;line-height:12px;color:#000;transform:scaleX(0.9905);transform-origin:0 0;">root</div>
<svg class="a" style="left:6px;top:289px" width="12" height="16" viewBox="0 0 12 16">
<path d="M0.5 0.5 L8.5 0.5 L11.5 3.5 L11.5 15.5 L0.5 15.5 Z" fill="#fff" stroke="#8a8a8a" stroke-width="1"/>
<path d="M8.5 0.5 L8.5 3.5 L11.5 3.5" fill="none" stroke="#a0a0a0" stroke-width="1"/>
<path d="M2 3.5 H6.5 M2 5.5 H10 M2 7.5 H10 M2 9.5 H10 M2 11.5 H10 M2 13.5 H10" stroke="#909090" stroke-width="1"/>
</svg>
<div class="a t" style="left:28.00px;top:290.84px;font-size:12px;line-height:12px;color:#000;transform:scaleX(0.9300);transform-origin:0 0;">13.txt</div>
<div class="a t" style="left:206.00px;top:291.84px;font-size:12px;line-height:12px;color:#000;transform:scaleX(0.8643);transform-origin:0 0;">1024.0 KB</div>
<div class="a t" style="left:305.50px;top:291.84px;font-size:12px;line-height:12px;color:#000;transform:scaleX(0.9380);transform-origin:0 0;">1/19/2025 10:54 PM</div>
<div class="a t" style="left:425.50px;top:291.84px;font-size:12px;line-height:12px;color:#000;transform:scaleX(1.0902);transform-origin:0 0;">rw-r--r--</div>
<div class="a t" style="left:525.50px;top:291.84px;font-size:12px;line-height:12px;color:#000;transform:scaleX(0.9905);transform-origin:0 0;">root</div>
<div class="a t" style="left:625.50px;top:291.84px;font-size:12px;line-height:12px;color:#000;transform:scaleX(0.9905);transform-origin:0 0;">root</div>
<svg class="a" style="left:6px;top:311px" width="12" height="16" viewBox="0 0 12 16">
<path d="M0.5 0.5 L8.5 0.5 L11.5 3.5 L11.5 15.5 L0.5 15.5 Z" fill="#fff" stroke="#8a8a8a" stroke-width="1"/>
<path d="M8.5 0.5 L8.5 3.5 L11.5 3.5" fill="none" stroke="#a0a0a0" stroke-width="1"/>
<path d="M2 3.5 H6.5 M2 5.5 H10 M2 7.5 H10 M2 9.5 H10 M2 11.5 H10 M2 13.5 H10" stroke="#909090" stroke-width="1"/>
</svg>
<div class="a t" style="left:28.00px;top:312.84px;font-size:12px;line-height:12px;color:#000;transform:scaleX(0.9300);transform-origin:0 0;">14.txt</div>
<div class="a t" style="left:206.00px;top:313.84px;font-size:12px;line-height:12px;color:#000;transform:scaleX(0.8643);transform-origin:0 0;">1024.0 KB</div>
<div class="a t" style="left:305.50px;top:313.84px;font-size:12px;line-height:12px;color:#000;transform:scaleX(0.9380);transform-origin:0 0;">1/19/2025 10:54 PM</div>
<div class="a t" style="left:425.50px;top:313.84px;font-size:12px;line-height:12px;color:#000;transform:scaleX(1.0902);transform-origin:0 0;">rw-r--r--</div>
<div class="a t" style="left:525.50px;top:313.84px;font-size:12px;line-height:12px;color:#000;transform:scaleX(0.9905);transform-origin:0 0;">root</div>
<div class="a t" style="left:625.50px;top:313.84px;font-size:12px;line-height:12px;color:#000;transform:scaleX(0.9905);transform-origin:0 0;">root</div>
<svg class="a" style="left:6px;top:333px" width="12" height="16" viewBox="0 0 12 16">
<path d="M0.5 0.5 L8.5 0.5 L11.5 3.5 L11.5 15.5 L0.5 15.5 Z" fill="#fff" stroke="#8a8a8a" stroke-width="1"/>
<path d="M8.5 0.5 L8.5 3.5 L11.5 3.5" fill="none" stroke="#a0a0a0" stroke-width="1"/>
<path d="M2 3.5 H6.5 M2 5.5 H10 M2 7.5 H10 M2 9.5 H10 M2 11.5 H10 M2 13.5 H10" stroke="#909090" stroke-width="1"/>
</svg>
<div class="a t" style="left:28.00px;top:334.84px;font-size:12px;line-height:12px;color:#000;transform:scaleX(0.9300);transform-origin:0 0;">15.txt</div>
<div class="a t" style="left:206.00px;top:335.84px;font-size:12px;line-height:12px;color:#000;transform:scaleX(0.8643);transform-origin:0 0;">1024.0 KB</div>
<div class="a t" style="left:305.50px;top:335.84px;font-size:12px;line-height:12px;color:#000;transform:scaleX(0.9380);transform-origin:0 0;">1/19/2025 10:54 PM</div>
<div class="a t" style="left:425.50px;top:335.84px;font-size:12px;line-height:12px;color:#000;transform:scaleX(1.0902);transform-origin:0 0;">rw-r--r--</div>
<div class="a t" style="left:525.50px;top:335.84px;font-size:12px;line-height:12px;color:#000;transform:scaleX(0.9905);transform-origin:0 0;">root</div>
<div class="a t" style="left:625.50px;top:335.84px;font-size:12px;line-height:12px;color:#000;transform:scaleX(0.9905);transform-origin:0 0;">root</div>
<svg class="a" style="left:6px;top:355px" width="12" height="16" viewBox="0 0 12 16">
<path d="M0.5 0.5 L8.5 0.5 L11.5 3.5 L11.5 15.5 L0.5 15.5 Z" fill="#fff" stroke="#8a8a8a" stroke-width="1"/>
<path d="M8.5 0.5 L8.5 3.5 L11.5 3.5" fill="none" stroke="#a0a0a0" stroke-width="1"/>
<path d="M2 3.5 H6.5 M2 5.5 H10 M2 7.5 H10 M2 9.5 H10 M2 11.5 H10 M2 13.5 H10" stroke="#909090" stroke-width="1"/>
</svg>
<div class="a t" style="left:28.00px;top:356.84px;font-size:12px;line-height:12px;color:#000;transform:scaleX(0.9300);transform-origin:0 0;">16.txt</div>
<div class="a t" style="left:206.00px;top:357.84px;font-size:12px;line-height:12px;color:#000;transform:scaleX(0.8643);transform-origin:0 0;">1024.0 KB</div>
<div class="a t" style="left:305.50px;top:357.84px;font-size:12px;line-height:12px;color:#000;transform:scaleX(0.9380);transform-origin:0 0;">1/19/2025 10:54 PM</div>
<div class="a t" style="left:425.50px;top:357.84px;font-size:12px;line-height:12px;color:#000;transform:scaleX(1.0902);transform-origin:0 0;">rw-r--r--</div>
<div class="a t" style="left:525.50px;top:357.84px;font-size:12px;line-height:12px;color:#000;transform:scaleX(0.9905);transform-origin:0 0;">root</div>
<div class="a t" style="left:625.50px;top:357.84px;font-size:12px;line-height:12px;color:#000;transform:scaleX(0.9905);transform-origin:0 0;">root</div>
<svg class="a" style="left:6px;top:377px" width="12" height="16" viewBox="0 0 12 16">
<path d="M0.5 0.5 L8.5 0.5 L11.5 3.5 L11.5 15.5 L0.5 15.5 Z" fill="#fff" stroke="#8a8a8a" stroke-width="1"/>
<path d="M8.5 0.5 L8.5 3.5 L11.5 3.5" fill="none" stroke="#a0a0a0" stroke-width="1"/>
<path d="M2 3.5 H6.5 M2 5.5 H10 M2 7.5 H10 M2 9.5 H10 M2 11.5 H10 M2 13.5 H10" stroke="#909090" stroke-width="1"/>
</svg>
<div class="a t" style="left:28.00px;top:378.84px;font-size:12px;line-height:12px;color:#000;transform:scaleX(0.9300);transform-origin:0 0;">17.txt</div>
<div class="a t" style="left:206.00px;top:379.84px;font-size:12px;line-height:12px;color:#000;transform:scaleX(0.8643);transform-origin:0 0;">1024.0 KB</div>
<div class="a t" style="left:305.50px;top:379.84px;font-size:12px;line-height:12px;color:#000;transform:scaleX(0.9380);transform-origin:0 0;">1/19/2025 10:54 PM</div>
<div class="a t" style="left:425.50px;top:379.84px;font-size:12px;line-height:12px;color:#000;transform:scaleX(1.0902);transform-origin:0 0;">rw-r--r--</div>
<div class="a t" style="left:525.50px;top:379.84px;font-size:12px;line-height:12px;color:#000;transform:scaleX(0.9905);transform-origin:0 0;">root</div>
<div class="a t" style="left:625.50px;top:379.84px;font-size:12px;line-height:12px;color:#000;transform:scaleX(0.9905);transform-origin:0 0;">root</div>
<svg class="a" style="left:6px;top:399px" width="12" height="16" viewBox="0 0 12 16">
<path d="M0.5 0.5 L8.5 0.5 L11.5 3.5 L11.5 15.5 L0.5 15.5 Z" fill="#fff" stroke="#8a8a8a" stroke-width="1"/>
<path d="M8.5 0.5 L8.5 3.5 L11.5 3.5" fill="none" stroke="#a0a0a0" stroke-width="1"/>
<path d="M2 3.5 H6.5 M2 5.5 H10 M2 7.5 H10 M2 9.5 H10 M2 11.5 H10 M2 13.5 H10" stroke="#909090" stroke-width="1"/>
</svg>
<div class="a t" style="left:28.00px;top:400.84px;font-size:12px;line-height:12px;color:#000;transform:scaleX(0.9300);transform-origin:0 0;">18.txt</div>
<div class="a t" style="left:206.00px;top:401.84px;font-size:12px;line-height:12px;color:#000;transform:scaleX(0.8643);transform-origin:0 0;">1024.0 KB</div>
<div class="a t" style="left:305.50px;top:401.84px;font-size:12px;line-height:12px;color:#000;transform:scaleX(0.9380);transform-origin:0 0;">1/19/2025 10:54 PM</div>
<div class="a t" style="left:425.50px;top:401.84px;font-size:12px;line-height:12px;color:#000;transform:scaleX(1.0902);transform-origin:0 0;">rw-r--r--</div>
<div class="a t" style="left:525.50px;top:401.84px;font-size:12px;line-height:12px;color:#000;transform:scaleX(0.9905);transform-origin:0 0;">root</div>
<div class="a t" style="left:625.50px;top:401.84px;font-size:12px;line-height:12px;color:#000;transform:scaleX(0.9905);transform-origin:0 0;">root</div>
<svg class="a" style="left:6px;top:421px" width="12" height="16" viewBox="0 0 12 16">
<path d="M0.5 0.5 L8.5 0.5 L11.5 3.5 L11.5 15.5 L0.5 15.5 Z" fill="#fff" stroke="#8a8a8a" stroke-width="1"/>
<path d="M8.5 0.5 L8.5 3.5 L11.5 3.5" fill="none" stroke="#a0a0a0" stroke-width="1"/>
<path d="M2 3.5 H6.5 M2 5.5 H10 M2 7.5 H10 M2 9.5 H10 M2 11.5 H10 M2 13.5 H10" stroke="#909090" stroke-width="1"/>
</svg>
<div class="a t" style="left:28.00px;top:422.84px;font-size:12px;line-height:12px;color:#000;transform:scaleX(0.9300);transform-origin:0 0;">19.txt</div>
<div class="a t" style="left:206.00px;top:423.84px;font-size:12px;line-height:12px;color:#000;transform:scaleX(0.8643);transform-origin:0 0;">1024.0 KB</div>
<div class="a t" style="left:305.50px;top:423.84px;font-size:12px;line-height:12px;color:#000;transform:scaleX(0.9380);transform-origin:0 0;">1/19/2025 10:54 PM</div>
<div class="a t" style="left:425.50px;top:423.84px;font-size:12px;line-height:12px;color:#000;transform:scaleX(1.0902);transform-origin:0 0;">rw-r--r--</div>
<div class="a t" style="left:525.50px;top:423.84px;font-size:12px;line-height:12px;color:#000;transform:scaleX(0.9905);transform-origin:0 0;">root</div>
<div class="a t" style="left:625.50px;top:423.84px;font-size:12px;line-height:12px;color:#000;transform:scaleX(0.9905);transform-origin:0 0;">root</div>
</div>
<div class="a" style="left:999px;top:222px;width:17px;height:431px;background:#f0f0f0"></div>
<div class="a" style="left:999px;top:239px;width:17px;height:19px;background:#cdcdcd"></div>
<svg class="a" style="left:999px;top:222px" width="17" height="431" viewBox="0 0 17 431">
<path d="M5.5 11 L8.8 7.7 L12.1 11" fill="none" stroke="#8a8a8a" stroke-width="1.1"/>
<path d="M5.5 421.5 L8.8 424.8 L12.1 421.5" fill="none" stroke="#8a8a8a" stroke-width="1.1"/>
</svg>
<div class="a" style="left:1017px;top:48px;width:6px;height:140px;overflow:hidden">
<div class="a t" style="left:2.00px;top:1.69px;font-size:11px;line-height:11px;color:#1a1a3a;">c</div>
<div class="a t" style="left:2.00px;top:21.49px;font-size:11px;line-height:11px;color:#1a1a3a;">c</div>
<div class="a t" style="left:2.00px;top:40.19px;font-size:11px;line-height:11px;color:#1a1a3a;">g</div>
<div class="a t" style="left:2.00px;top:81.49px;font-size:11px;line-height:11px;color:#1a1a3a;">c</div>
<div class="a t" style="left:2.00px;top:101.69px;font-size:11px;line-height:11px;color:#1a1a3a;">c</div>
<div class="a t" style="left:2.00px;top:121.19px;font-size:11px;line-height:11px;color:#1a1a3a;">c</div>
<div class="a" style="left:0px;top:4px;width:1px;height:6px;background:#2a2a50"></div>
<div class="a" style="left:0px;top:24px;width:1px;height:6px;background:#2a2a50"></div>
<div class="a" style="left:0px;top:84px;width:1px;height:6px;background:#2a2a50"></div>
</div>
<div class="a" style="left:0px;top:653px;width:1016px;height:21px;background:#005f4b"></div>
<div class="a t" style="left:1.90px;top:662.34px;font-size:12px;line-height:12px;color:#fff;transform:scaleX(0.9615);transform-origin:0 0;">401 objects selected</div>
<div class="a" style="left:6px;top:125px;width:117px;height:48px;background:#f0f0f0;border:1px solid #c6c6c6"></div>
<svg class="a" style="left:8px;top:126px" width="30" height="46" viewBox="8 126 30 46">
<path d="M17.5 131.5 H23.7 L26.5 134.3 V139 H21 V135.5 H17.5 Z" fill="#fff"/>
<path d="M17.5 133.7 V131.5 H23.7 L26.5 134.3 V136.7" fill="none" stroke="#6e6e6e" stroke-width="1.1"/>
<path d="M23.7 131.5 V134.3 H26.5" fill="none" stroke="#6e6e6e" stroke-width="0.8"/>
<path d="M13.5 135.5 H19.8 L21.3 137 V146.6 H13.5 Z" fill="#fff"/>
<path d="M13.5 140.4 V135.5 H19.8 L21.3 137" fill="none" stroke="#6e6e6e" stroke-width="1.1"/>
<path d="M13 146.6 H15 M19 146.6 H21" stroke="#6e6e6e" stroke-width="1.1"/>
<path d="M16.9 139 L21 143.1 L21 144.8 L17.9 142.3 L17.9 147 L15.9 147 L15.9 142.3 L13.1 144.8 L13.1 143.1 Z" fill="#3cb04a"/>
<path d="M21.4 139.3 L27.8 145.8 M27.8 139.3 L21.4 145.8" stroke="#e35656" stroke-width="2.8"/>
<path d="M17.5 153.5 H23.7 L26.5 156.3 V164.5 H17.5 Z" fill="#fff"/>
<path d="M17.5 155.7 V153.5 H23.7 L26.5 156.3 V164.5 H24.2" fill="none" stroke="#6e6e6e" stroke-width="1.1"/>
<path d="M23.7 153.5 V156.3 H26.5" fill="none" stroke="#6e6e6e" stroke-width="0.8"/>
<path d="M13.5 157.5 H19.8 L22.6 160.3 V168.6 H13.5 Z" fill="#fff"/>
<path d="M13.5 162.4 V157.5 H19.8 L22.6 160.3 V168.6 H19" fill="none" stroke="#6e6e6e" stroke-width="1.1"/>
<path d="M19.8 157.5 V160.3 H22.6" fill="none" stroke="#6e6e6e" stroke-width="0.8"/>
<path d="M13 168.6 H15" stroke="#6e6e6e" stroke-width="1.1"/>
<path d="M16.9 161 L21 165.1 L21 166.8 L17.9 164.3 L17.9 169 L15.9 169 L15.9 164.3 L13.1 166.8 L13.1 165.1 Z" fill="#3cb04a"/>
</svg>
<div class="a t" style="left:38.80px;top:131.84px;font-size:12px;line-height:12px;color:#3b3b45;transform:scaleX(0.9712);transform-origin:0 0;">Overwrite</div>
<div class="a" style="left:8px;top:127px;width:2px;height:2px;background:#a9cdc0;border-radius:1px 0 0 0"></div>
<div class="a t" style="left:38.80px;top:153.84px;font-size:12px;line-height:12px;color:#3b3b45;transform:scaleX(0.8893);transform-origin:0 0;">Keep</div>
<div class="a" style="left:-10px;top:106px;width:153px;height:77px;border:3px solid #fe0000"></div>
</body></html>
